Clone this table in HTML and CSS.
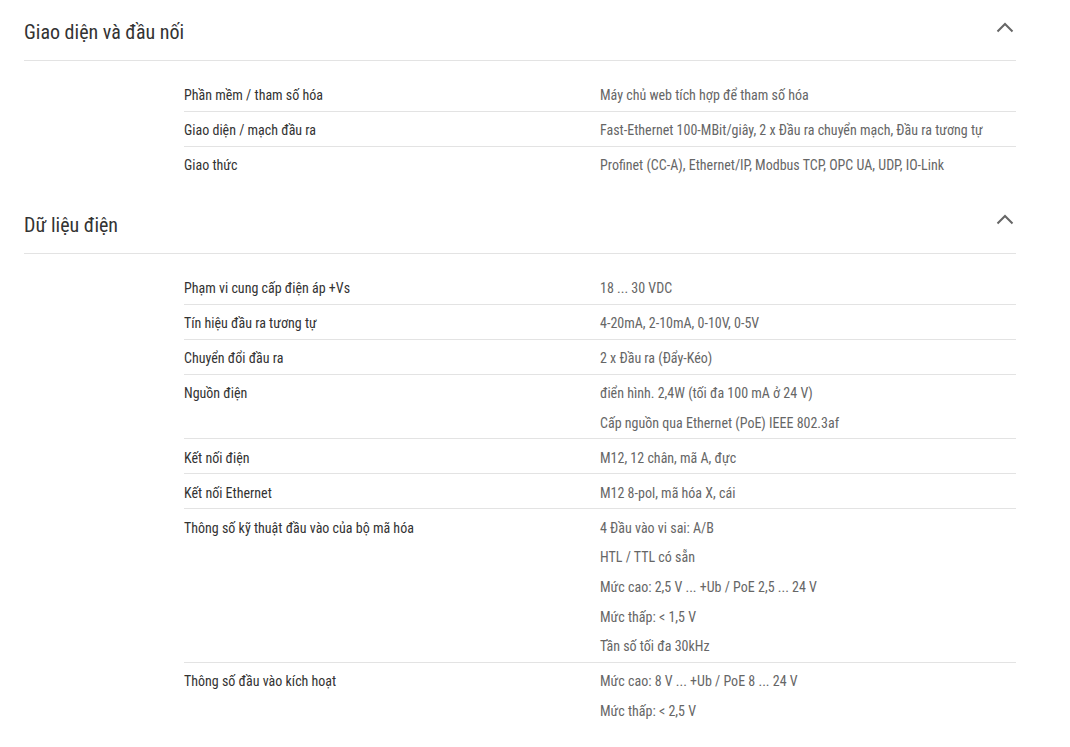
FILE: index.html
```html
<!DOCTYPE html>
<html lang="vi">
<head>
<meta charset="utf-8">
<title>Thông số</title>
<link rel="stylesheet" href="styles.css">
</head>
<body>
<div class="page">
  <section class="group">
    <div class="group-head">
      <h2 class="group-title">Giao diện và đầu nối</h2>
      <svg class="chev" width="18" height="11" viewBox="0 0 18 11"><path d="M1.5 9.5 L9 2 L16.5 9.5" fill="none" stroke="#666" stroke-width="2"/></svg>
    </div>
    <div class="rows">
      <div class="row"><div class="label">Phần mềm / tham số hóa</div><div class="value"><p>Máy chủ web tích hợp để tham số hóa</p></div></div>
      <div class="row"><div class="label">Giao diện / mạch đầu ra</div><div class="value"><p>Fast-Ethernet 100-MBit/giây, 2 x Đầu ra chuyển mạch, Đầu ra tương tự</p></div></div>
      <div class="row"><div class="label">Giao thức</div><div class="value"><p>Profinet (CC-A), Ethernet/IP, Modbus TCP, OPC UA, UDP, IO-Link</p></div></div>
    </div>
  </section>
  <section class="group">
    <div class="group-head">
      <h2 class="group-title">Dữ liệu điện</h2>
      <svg class="chev" width="18" height="11" viewBox="0 0 18 11"><path d="M1.5 9.5 L9 2 L16.5 9.5" fill="none" stroke="#666" stroke-width="2"/></svg>
    </div>
    <div class="rows">
      <div class="row"><div class="label">Phạm vi cung cấp điện áp +Vs</div><div class="value"><p>18 ... 30 VDC</p></div></div>
      <div class="row"><div class="label">Tín hiệu đầu ra tương tự</div><div class="value"><p>4-20mA, 2-10mA, 0-10V, 0-5V</p></div></div>
      <div class="row"><div class="label">Chuyển đổi đầu ra</div><div class="value"><p>2 x Đầu ra (Đẩy-Kéo)</p></div></div>
      <div class="row"><div class="label">Nguồn điện</div><div class="value"><p>điển hình. 2,4W (tối đa 100 mA ở 24 V)</p><p>Cấp nguồn qua Ethernet (PoE) IEEE 802.3af</p></div></div>
      <div class="row"><div class="label">Kết nối điện</div><div class="value"><p>M12, 12 chân, mã A, đực</p></div></div>
      <div class="row"><div class="label">Kết nối Ethernet</div><div class="value"><p>M12 8-pol, mã hóa X, cái</p></div></div>
      <div class="row"><div class="label">Thông số kỹ thuật đầu vào của bộ mã hóa</div><div class="value"><p>4 Đầu vào vi sai: A/B</p><p>HTL / TTL có sẵn</p><p>Mức cao: 2,5 V ... +Ub / PoE 2,5 ... 24 V</p><p>Mức thấp: &lt; 1,5 V</p><p>Tần số tối đa 30kHz</p></div></div>
      <div class="row"><div class="label">Thông số đầu vào kích hoạt</div><div class="value"><p>Mức cao: 8 V ... +Ub / PoE 8 ... 24 V</p><p>Mức thấp: &lt; 2,5 V</p></div></div>
    </div>
  </section>
</div>
</body>
</html>
```
FILE: styles.css
```css
html, body {
  margin: 0;
  padding: 0;
  background: #fff;
}
body {
  font-family: "Roboto Condensed", Roboto, "Liberation Sans", sans-serif;
  color: #333;
}
.page {
  width: 992px;
  margin-left: 24px;
}
.group-head {
  height: 56px;
  padding-top: 4px;
  border-bottom: 1px solid #e3e3e3;
  display: flex;
  align-items: center;
  justify-content: space-between;
}
.group-title {
  margin: 0;
  font-size: 20px;
  font-weight: 400;
  color: #333;
}
.chev {
  margin-right: 2px;
  margin-top: -10px;
}
.rows {
  margin-left: 160px;
  padding-top: 16px;
  padding-bottom: 11px;
}
.row {
  display: flex;
  padding: 4.4px 0 0;
  border-bottom: 1px solid #e3e3e3;
  font-size: 14px;
  line-height: 29.6px;
}
.row:last-child {
  border-bottom-color: transparent;
}
.label {
  width: 416px;
  color: #333;
}
.value {
  flex: 1;
  color: #666;
}
.value p {
  margin: 0;
}
```
